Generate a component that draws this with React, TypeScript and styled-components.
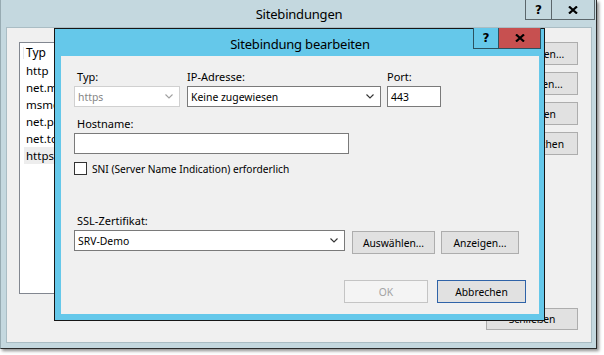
import React from "react";
import styled, { createGlobalStyle, css } from "styled-components";

const Global = createGlobalStyle`
  html, body { margin: 0; padding: 0; background: #ffffff; }
  body { font-family: "Noto Sans", "Open Sans", Arial, sans-serif; font-size: 11px; color: #000; }
  * { box-sizing: border-box; }
`;

const FONT = `"Noto Sans", "Open Sans", Arial, sans-serif`;

const Desktop = styled.div`
  position: relative;
  width: 604px;
  height: 355px;
  overflow: hidden;
  background: #ffffff;
`;

const OuterWindow = styled.div`
  position: relative;
  width: 597px;
  height: 349px;
  display: flex;
  flex-direction: column;
  background: #c4d8df;
  border-left: 1px solid #97abb2;
  border-right: 1px solid #2a2a2a;
  border-bottom: 1px solid #2a2a2a;
  box-shadow: 2px 2px 3px rgba(0, 0, 0, 0.45);
  padding: 0 4px 5px 5px;
`;

const TitleBar = styled.div`
  height: 27px;
  flex: none;
  display: flex;
  align-items: center;
  justify-content: center;
  font-family: ${FONT};
  font-size: 13px;
  letter-spacing: -0.2px;
  color: #000;
  padding-top: 1px;
`;

const CaptionGroup = styled.div<{ $top: number; $right: number }>`
  position: absolute;
  top: ${(p) => p.$top}px;
  right: ${(p) => p.$right}px;
  display: flex;
`;

const CaptionButton = styled.div<{ $w: number; $h: number; $bg: string; $line: string }>`
  width: ${(p) => p.$w}px;
  height: ${(p) => p.$h}px;
  background: ${(p) => p.$bg};
  border: 1px solid ${(p) => p.$line};
  border-top: none;
  display: flex;
  align-items: center;
  justify-content: center;
  font-family: "DejaVu Sans", Arial, sans-serif;
  font-weight: bold;
  font-size: 12px;
  color: #000;
  & + & { margin-left: -1px; }
`;

const OuterClient = styled.div`
  flex: 1;
  background: #f0f0f0;
  border: 1px solid #aabdc4;
  display: grid;
  grid-template-columns: 1fr 92px;
  grid-template-rows: 1fr 22px;
  column-gap: 8px;
  row-gap: 14px;
  padding: 14px 13px 12px 12px;
`;

const ListBox = styled.div`
  background: #ffffff;
  border: 1px solid #828790;
  display: flex;
  flex-direction: column;
  font-family: ${FONT};
  font-size: 11px;
`;

const ListHeader = styled.div`
  height: 19px;
  display: flex;
  align-items: center;
  padding-left: 6px;
  font-size: 12px;
  position: relative;
  &::before {
    content: "";
    position: absolute;
    left: 3px;
    top: 4px;
    bottom: 3px;
    width: 1px;
    background: #e3e6ea;
  }
`;

const ListRow = styled.div<{ $selected?: boolean }>`
  height: 17px;
  display: flex;
  align-items: center;
  margin-left: 4px;
  padding-left: 2px;
  font-size: 11.5px;
  background: ${(p) => (p.$selected ? "#ededed" : "transparent")};
`;

const ListCell = styled.span`
  width: 44px;
  overflow: hidden;
  white-space: nowrap;
`;

const SideColumn = styled.div`
  display: flex;
  flex-direction: column;
  gap: 7px;
`;

const WinButton = styled.div<{ $w?: number; $h?: number; $ml?: number; $variant?: "default" | "disabled" }>`
  font-family: ${FONT};
  font-size: 10.3px;
  display: flex;
  align-items: center;
  justify-content: center;
  color: #000;
  background: #e1e1e1;
  border: 1px solid #adadad;
  white-space: nowrap;
  width: ${(p) => (p.$w ? `${p.$w}px` : "100%")};
  height: ${(p) => p.$h ?? 23}px;
  margin-left: ${(p) => p.$ml ?? 0}px;
  flex: none;
  ${(p) =>
    p.$variant === "default" &&
    css`
      border-color: #2f63a8;
    `}
  ${(p) =>
    p.$variant === "disabled" &&
    css`
      background: #f4f4f4;
      border-color: #c4c4c4;
      color: #a3a3a3;
    `}
`;

const CloseSlot = styled.div`
  grid-column: 2;
  grid-row: 2;
`;

const Dialog = styled.div`
  position: absolute;
  left: 53px;
  top: 28px;
  width: 491px;
  height: 293px;
  background: #65c8ea;
  border: 1px solid #161616;
  display: flex;
  flex-direction: column;
  padding: 0 5px 7px 6px;
`;

const DialogTitle = styled(TitleBar)`
  height: 27px;
  padding-top: 2px;
`;

const DialogClient = styled.div`
  flex: 1;
  background: #f0f0f0;
  display: flex;
  flex-direction: column;
  padding: 13px 13px 11px 13px;
  font-family: ${FONT};
  font-size: 11px;
`;

const FieldRow = styled.div<{ $mt?: number }>`
  display: flex;
  align-items: flex-start;
  margin-top: ${(p) => p.$mt ?? 0}px;
`;

const Field = styled.div<{ $w: number; $ml?: number }>`
  width: ${(p) => p.$w}px;
  margin-left: ${(p) => p.$ml ?? 0}px;
  display: flex;
  flex-direction: column;
  gap: 1px;
`;

const Label = styled.div<{ $indent?: number }>`
  height: 16px;
  line-height: 16px;
  padding-left: ${(p) => p.$indent ?? 3}px;
  font-size: 11px;
  white-space: nowrap;
`;

const Box = styled.div<{ $disabled?: boolean }>`
  height: 21px;
  width: 100%;
  background: #ffffff;
  border: 1px solid ${(p) => (p.$disabled ? "#d0d0d0" : "#7a7a7a")};
  color: ${(p) => (p.$disabled ? "#858585" : "#000")};
  display: flex;
  align-items: center;
  justify-content: space-between;
  padding: 0 6px 0 3px;
  font-size: 10.4px;
  white-space: nowrap;
`;

const CheckRow = styled.div`
  display: flex;
  align-items: center;
  gap: 5px;
  margin-top: 8px;
  height: 13px;
  font-size: 10.2px;
  white-space: nowrap;
`;

const CheckBox = styled.div`
  width: 13px;
  height: 13px;
  background: #fff;
  border: 1px solid #333;
  flex: none;
`;

const ActionRow = styled.div<{ $mt: number; $justify?: string }>`
  display: flex;
  justify-content: ${(p) => p.$justify ?? "flex-start"};
  align-items: flex-start;
  margin-top: ${(p) => p.$mt}px;
`;

const Chevron = ({ color = "#333" }: { color?: string }) => (
  <svg width="8" height="5" viewBox="0 0 8 5" style={{ flex: "none" }}>
    <polyline points="0.5,0.5 4,4 7.5,0.5" fill="none" stroke={color} strokeWidth="1.1" />
  </svg>
);

const XGlyph = () => (
  <svg width="10" height="8" viewBox="0 0 10 8">
    <path d="M1 0.5 L9 7.5 M9 0.5 L1 7.5" stroke="#000" strokeWidth="2.2" fill="none" />
  </svg>
);

export default function App() {
  const rows = ["http", "net.msmq", "msmq.formatname", "net.pipe", "net.tcp", "https"];
  return (
    <>
      <Global />
      <Desktop>
        <OuterWindow>
          <TitleBar>Sitebindungen</TitleBar>
          <CaptionGroup $top={0} $right={1}>
            <CaptionButton $w={27} $h={20} $bg="#c4d8df" $line="#5b666b">?</CaptionButton>
            <CaptionButton $w={44} $h={20} $bg="#c4d8df" $line="#5b666b">
              <XGlyph />
            </CaptionButton>
          </CaptionGroup>
          <OuterClient>
            <ListBox>
              <ListHeader>Typ</ListHeader>
              {rows.map((r, i) => (
                <ListRow key={r} $selected={i === rows.length - 1}>
                  <ListCell>{r}</ListCell>
                </ListRow>
              ))}
            </ListBox>
            <SideColumn>
              <WinButton>Hinzufügen...</WinButton>
              <WinButton>Bearbeiten...</WinButton>
              <WinButton>Entfernen</WinButton>
              <WinButton>Durchsuchen</WinButton>
            </SideColumn>
            <CloseSlot>
              <WinButton $h={22}>Schließen</WinButton>
            </CloseSlot>
          </OuterClient>

          <Dialog>
            <DialogTitle>Sitebindung bearbeiten</DialogTitle>
            <CaptionGroup $top={-1} $right={3}>
              <CaptionButton $w={26} $h={21} $bg="#65c8ea" $line="#2b5260">?</CaptionButton>
              <CaptionButton $w={43} $h={21} $bg="#c75050" $line="#2b5260">
                <XGlyph />
              </CaptionButton>
            </CaptionGroup>
            <DialogClient>
              <FieldRow>
                <Field $w={106}>
                  <Label>Typ:</Label>
                  <Box $disabled>
                    https
                    <Chevron color="#a0a0a0" />
                  </Box>
                </Field>
                <Field $w={194} $ml={7}>
                  <Label $indent={0}>IP-Adresse:</Label>
                  <Box>
                    Keine zugewiesen
                    <Chevron />
                  </Box>
                </Field>
                <Field $w={54} $ml={6}>
                  <Label $indent={0}>Port:</Label>
                  <Box>443</Box>
                </Field>
              </FieldRow>
              <FieldRow $mt={9}>
                <Field $w={275}>
                  <Label>Hostname:</Label>
                  <Box />
                </Field>
              </FieldRow>
              <CheckRow>
                <CheckBox />
                SNI (Server Name Indication) erforderlich
              </CheckRow>
              <FieldRow $mt={38}>
                <Field $w={271}>
                  <Label>SSL-Zertifikat:</Label>
                  <Box>
                    SRV-Demo
                    <Chevron />
                  </Box>
                </Field>
                <ActionRow $mt={18}>
                  <WinButton $w={83} $ml={7}>Auswählen...</WinButton>
                  <WinButton $w={78} $ml={6}>Anzeigen...</WinButton>
                </ActionRow>
              </FieldRow>
              <ActionRow $mt={26} $justify="flex-end">
                <WinButton $w={84} $variant="disabled">OK</WinButton>
                <WinButton $w={89} $ml={9} $variant="default">Abbrechen</WinButton>
              </ActionRow>
            </DialogClient>
          </Dialog>
        </OuterWindow>
      </Desktop>
    </>
  );
}
